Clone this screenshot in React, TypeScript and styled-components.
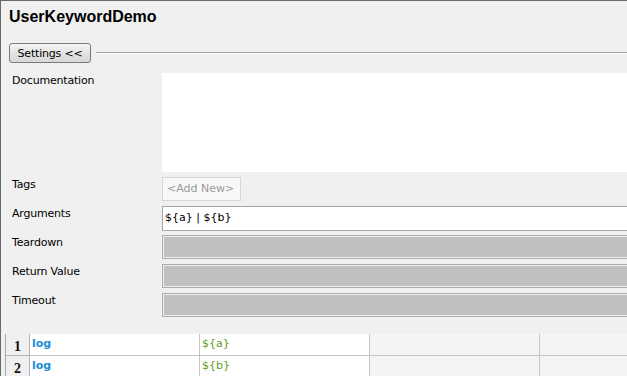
import React from "react";
import styled, { createGlobalStyle } from "styled-components";

const bg = "#f0f0f0";
const uiFont = `"DejaVu Sans", "Liberation Sans", sans-serif`;
const gridLine = "#c4c4c4";

const GlobalStyle = createGlobalStyle`
  html, body {
    margin: 0;
    padding: 0;
    background: ${bg};
  }
`;

const settings = [
  { label: "Tags", kind: "tags" },
  { label: "Arguments", kind: "text", value: "${a} | ${b}" },
  { label: "Teardown", kind: "disabled" },
  { label: "Return Value", kind: "disabled" },
  { label: "Timeout", kind: "disabled" }
];

const steps = [
  { keyword: "log", arg: "${a}" },
  { keyword: "log", arg: "${b}" }
];

export default function App() {
  return (
    <>
      <GlobalStyle />
      <Frame>
        <Title>UserKeywordDemo</Title>
        <SettingsRow>
          <ToggleButton>Settings &lt;&lt;</ToggleButton>
          <Divider />
        </SettingsRow>
        <Form>
          <Label>Documentation</Label>
          <DocArea />
          {settings.map(s => (
            <React.Fragment key={s.label}>
              <Label>{s.label}</Label>
              {s.kind === "tags" && (
                <FieldCell>
                  <AddTag>&lt;Add New&gt;</AddTag>
                </FieldCell>
              )}
              {s.kind === "text" && <TextField>{s.value}</TextField>}
              {s.kind === "disabled" && <DisabledField />}
            </React.Fragment>
          ))}
        </Form>
        <StepGrid>
          {steps.map((step, i) => (
            <React.Fragment key={i}>
              <RowHead>{i + 1}</RowHead>
              <Cell>
                <Keyword>{step.keyword}</Keyword>
              </Cell>
              <Cell>
                <Arg>{step.arg}</Arg>
              </Cell>
              <Cell empty />
              <Cell empty />
            </React.Fragment>
          ))}
        </StepGrid>
      </Frame>
    </>
  );
}

const Frame = styled.div`
  height: 376px;
  box-sizing: border-box;
  overflow: hidden;
  background: ${bg};
  border-top: 1px solid #6a6a6a;
  border-left: 1px solid #6a6a6a;
  display: flex;
  flex-direction: column;
  font-family: ${uiFont};
  font-size: 11px;
  color: #000;
`;

const Title = styled.div`
  padding: 6px 8px 0;
  font-family: "Liberation Sans", Arial, sans-serif;
  font-weight: bold;
  font-size: 16px;
  line-height: 20px;
`;

const SettingsRow = styled.div`
  display: flex;
  align-items: center;
  margin: 16px 0 0 8px;
`;

const ToggleButton = styled.div`
  width: 82px;
  height: 20px;
  box-sizing: border-box;
  border: 1px solid #7a7a7a;
  border-radius: 3px;
  background: linear-gradient(#f6f6f6, #e2e2e2 55%, #d8d8d8);
  display: flex;
  align-items: center;
  justify-content: center;
  font-size: 11px;
  letter-spacing: -0.2px;
  white-space: nowrap;
`;

const Divider = styled.div`
  flex: 1;
  margin-left: 5px;
  border-top: 1px solid #a0a0a0;
  border-bottom: 1px solid #fdfdfd;
`;

const Form = styled.div`
  display: grid;
  grid-template-columns: 150px 1fr;
  grid-auto-rows: 24px;
  grid-template-rows: 99px;
  row-gap: 5px;
  margin: 10px -10px 0 11px;
`;

const Label = styled.div`
  line-height: 13px;
  padding-top: 1px;
  letter-spacing: -0.2px;
  white-space: nowrap;
`;

const DocArea = styled.div`
  background: #fff;
`;

const FieldCell = styled.div`
  display: flex;
`;

const AddTag = styled.div`
  width: 79px;
  box-sizing: border-box;
  border: 1px solid #d6d6d6;
  background: #f8f8f8;
  color: #9a9a9a;
  font-size: 11px;
  line-height: 22px;
  padding-left: 4px;
  white-space: nowrap;
  overflow: hidden;
`;

const TextField = styled.div`
  box-sizing: border-box;
  border: 1px solid #a6a6a6;
  background: #fff;
  font-size: 11px;
  line-height: 22px;
  padding-left: 2px;
  margin-bottom: -1px;
  white-space: pre;
`;

const DisabledField = styled.div`
  box-sizing: border-box;
  border: 1px solid #adadad;
  box-shadow: inset 0 0 0 1px #eeeeee;
  background: #c0c0c0;
`;

const StepGrid = styled.div`
  display: grid;
  grid-template-columns: 24px repeat(4, 170px);
  grid-auto-rows: 22px;
  margin: 17px 0 0 4px;
  border-left: 1px solid #a8a8a8;
`;

const RowHead = styled.div`
  box-sizing: border-box;
  border-right: 1px solid #b4b4b4;
  border-bottom: 1px solid #b4b4b4;
  background: #f0f0f0;
  font-family: "Liberation Serif", "Times New Roman", serif;
  font-weight: bold;
  font-size: 14px;
  line-height: 26px;
  text-align: center;
  color: #111;
`;

const Cell = styled.div<{ empty?: boolean }>`
  box-sizing: border-box;
  border-right: 1px solid ${gridLine};
  border-bottom: 1px solid ${gridLine};
  background: ${p => (p.empty ? "#f4f4f4" : "#fff")};
  padding: 3px 0 0 2px;
  font-size: 11px;
  line-height: 13px;
`;

const Keyword = styled.span`
  color: #1a8ed6;
  font-weight: bold;
`;

const Arg = styled.span`
  color: #5f9c1e;
`;
